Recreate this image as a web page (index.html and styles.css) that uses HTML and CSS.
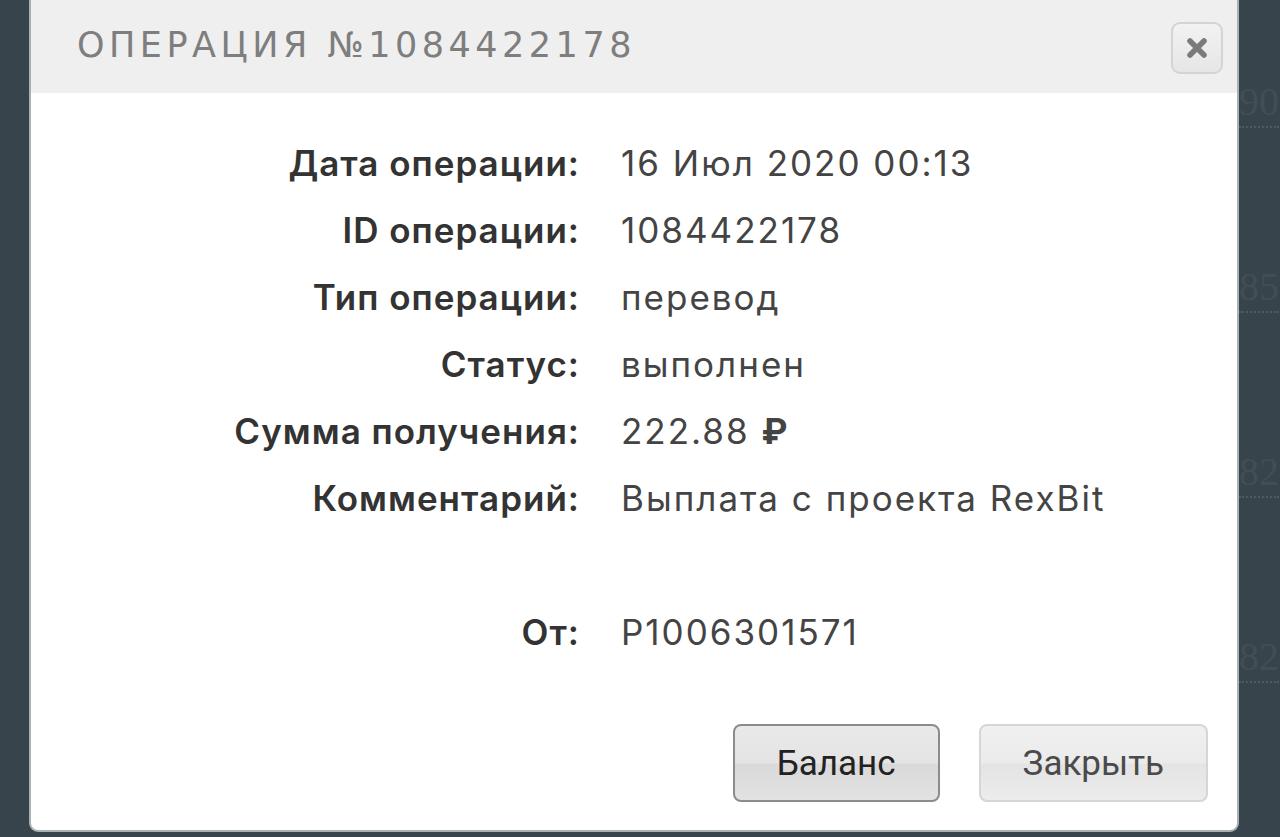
FILE: index.html
```html
<!DOCTYPE html>
<html lang="ru">
<head>
    <meta charset="UTF-8">
    <meta name="viewport" content="width=device-width, initial-scale=1.0">
    <title>Операция №1084422178</title>
    <link rel="stylesheet" href="styles.css">
</head>

<body>

    <!-- page behind the dialog -->
    <div class="page">
        <div class="page-row"><span>90</span></div>
        <div class="page-row"><span>85</span></div>
        <div class="page-row"><span>82</span></div>
        <div class="page-row"><span>82</span></div>
    </div>

    <div class="overlay">
        <div class="modal">
            <div class="modal-header">
                <h2>Операция №1084422178</h2>
                <button class="close-btn" type="button" aria-label="Закрыть">
                    <svg width="22" height="22" viewBox="0 0 22 22">
                        <path d="M4 4 L18 18 M18 4 L4 18" stroke="#7a7a7a" stroke-width="5.5" stroke-linecap="round"/>
                    </svg>
                </button>
            </div>

            <div class="modal-body">
                <div class="info">
                    <div class="label">Дата операции:</div>
                    <div class="value">16 Июл 2020 00:13</div>

                    <div class="label">ID операции:</div>
                    <div class="value">1084422178</div>

                    <div class="label">Тип операции:</div>
                    <div class="value">перевод</div>

                    <div class="label">Статус:</div>
                    <div class="value">выполнен</div>

                    <div class="label">Сумма получения:</div>
                    <div class="value">222.88 <b class="rub">₽</b></div>

                    <div class="label">Комментарий:</div>
                    <div class="value">Выплата с проекта RexBit</div>

                    <div class="label"></div>
                    <div class="value"></div>

                    <div class="label">От:</div>
                    <div class="value">P1006301571</div>
                </div>
            </div>

            <div class="modal-footer">
                <button class="btn btn-primary" type="button">Баланс</button>
                <button class="btn" type="button">Закрыть</button>
            </div>
        </div>
    </div>

</body>
</html>
```

FILE: styles.css
```css
/* Page */
body {
    margin: 0;
    background-color: #37444c;
    font-family: "Inter", "Noto Sans", sans-serif;
    overflow: hidden;
}

/* faint table of the page behind the dialog */
.page {
    padding-top: 82px;
}

.page-row {
    height: 185px;
    padding-left: 1239px;
    white-space: nowrap;
}

.page-row span {
    display: inline-block;
    font-family: "Liberation Serif", serif;
    font-size: 40px;
    line-height: 40px;
    color: #414e56;
    padding-bottom: 4px;
    border-bottom: 2px dotted #4d5a62;
}

/* Dialog */
.overlay {
    position: absolute;
    top: 0;
    left: 0;
    right: 0;
}

.modal {
    margin-left: 31px;
    width: 1206px;
    height: 830px;
    background-color: white;
    border-radius: 0 0 7px 7px;
    box-shadow: 0 0 0 2px #a9b1b5;
    display: flex;
    flex-direction: column;
}

.modal-header {
    height: 93px;
    background-color: #efefef;
    display: flex;
    align-items: center;
    justify-content: space-between;
    padding: 0 14px 0 46px;
}

h2 {
    margin: 0 0 4px;
    font-family: "DejaVu Sans", sans-serif;
    font-weight: normal;
    font-size: 35px;
    letter-spacing: 4.5px;
    text-transform: uppercase;
    color: #7e7e7e;
}

.close-btn {
    width: 52px;
    height: 52px;
    margin-top: 2px;
    border: 2px solid #d4d4d4;
    border-radius: 9px;
    background: linear-gradient(#f2f2f2, #e6e6e6);
    display: flex;
    align-items: center;
    justify-content: center;
    padding: 0;
}

/* Details */
.modal-body {
    padding-top: 36px;
    flex: 1;
}

.info {
    display: grid;
    grid-template-columns: 549px auto;
    column-gap: 41px;
    grid-auto-rows: 67px;
    align-items: center;
    font-size: 35px;
}

.label {
    text-align: right;
    font-weight: 600;
    letter-spacing: 1px;
    color: #333;
}

.value {
    letter-spacing: 2px;
    color: #444;
}

.rub {
    font-weight: 700;
}

/* Buttons */
.modal-footer {
    display: flex;
    justify-content: flex-end;
    gap: 39px;
    padding: 0 29px 28px 0;
}

.btn {
    height: 78px;
    padding: 0 42px;
    font-family: "Roboto", sans-serif;
    font-size: 35px;
    color: #4a4a4a;
    border: 2px solid #d6d6d6;
    border-radius: 8px;
    background: linear-gradient(#f0f0f0, #ebebeb 50%, #e4e4e4 52%, #ececec);
}

.btn-primary {
    color: #222;
    border-color: #8c8c8c;
    background: linear-gradient(#e9e9e9, #e4e4e4 50%, #d9d9d9 52%, #e2e2e2);
}
```
